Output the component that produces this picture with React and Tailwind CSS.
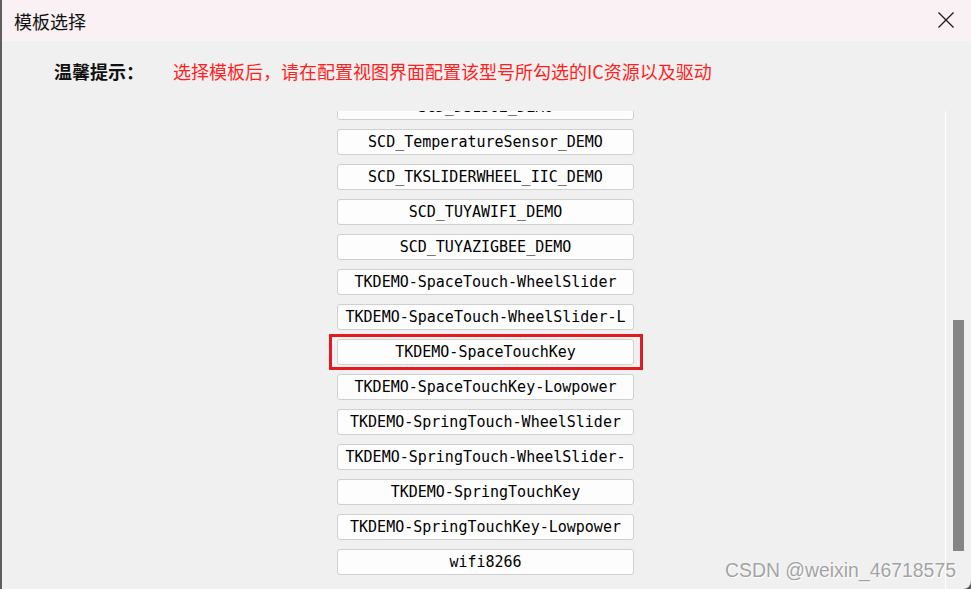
import React from "react";

const items = [
  "SCD_DS1302_DEMO",
  "SCD_TemperatureSensor_DEMO",
  "SCD_TKSLIDERWHEEL_IIC_DEMO",
  "SCD_TUYAWIFI_DEMO",
  "SCD_TUYAZIGBEE_DEMO",
  "TKDEMO-SpaceTouch-WheelSlider",
  "TKDEMO-SpaceTouch-WheelSlider-L",
  "TKDEMO-SpaceTouchKey",
  "TKDEMO-SpaceTouchKey-Lowpower",
  "TKDEMO-SpringTouch-WheelSlider",
  "TKDEMO-SpringTouch-WheelSlider-",
  "TKDEMO-SpringTouchKey",
  "TKDEMO-SpringTouchKey-Lowpower",
  "wifi8266",
];

const cjk = { fontFamily: '"Noto Sans CJK SC", "Noto Sans", sans-serif' };
const mono = { fontFamily: '"DejaVu Sans Mono", "Liberation Mono", monospace' };

export default function App() {
  return (
    <div className="w-[971px] h-[589px] bg-[#5e5e5e] flex overflow-hidden">
      <div className="ml-[2px] flex-1 flex flex-col bg-[#f0f0f0] rounded-br-[8px] overflow-hidden relative">
        {/* Title bar */}
        <div className="h-[41px] shrink-0 bg-[#f9f1f3] flex items-center justify-between pl-[12px] pr-[17px]">
          <span className="text-[18px] leading-[24px] text-[#111]" style={cjk}>
            模板选择
          </span>
          <svg width="16" height="16" viewBox="0 0 16 16" className="mt-[-1px]">
            <path d="M0.5 0.5 L15.5 15.5 M15.5 0.5 L0.5 15.5" stroke="#1c1c1c" strokeWidth="1.3" fill="none" />
          </svg>
        </div>

        {/* Hint */}
        <div className="h-[70px] shrink-0 pt-[18px] pl-[52px] flex" style={cjk}>
          <span className="text-[18px] leading-[24px] font-bold text-[#111]">温馨提示：</span>
          <span className="ml-[29px] text-[18px] leading-[24px] text-[#ff1f1f]">
            选择模板后，请在配置视图界面配置该型号所勾选的IC资源以及驱动
          </span>
        </div>

        {/* List + scrollbar */}
        <div className="flex-1 flex min-h-0">
          <div className="flex-1 overflow-hidden pl-[335px]">
            <div className="-mt-[17px] flex flex-col gap-[9px]">
              {items.map((t) => (
                <div key={t} className="relative w-[297px] h-[26px] shrink-0">
                  <div
                    className="w-full h-full bg-[#fdfdfd] border border-[#d0d0d0] rounded-[3px] flex items-center justify-center overflow-hidden whitespace-nowrap text-[15px] text-black"
                    style={mono}
                  >
                    {t}
                  </div>
                  {t === "TKDEMO-SpaceTouchKey" && (
                    <div className="absolute -left-[8px] -right-[9px] -top-[5px] -bottom-[5px] border-[3px] border-[#e11b22] pointer-events-none" />
                  )}
                </div>
              ))}
            </div>
          </div>
          <div className="w-[26px] shrink-0 border-l border-white flex flex-col">
            <div className="ml-[7px] mt-[209px] w-[11px] h-[231px] bg-[#858585]" />
          </div>
        </div>

        {/* Watermark */}
        <div
          className="absolute left-[723px] top-[559px] text-[19.4px] leading-[22px] text-[#a3a3a3] whitespace-nowrap"
          style={{ fontFamily: '"Liberation Sans", Arial, sans-serif', textShadow: "0 0 1px #ffffff, 1px 1px 1px #ffffff" }}
        >
          CSDN @weixin_46718575
        </div>
      </div>
    </div>
  );
}
